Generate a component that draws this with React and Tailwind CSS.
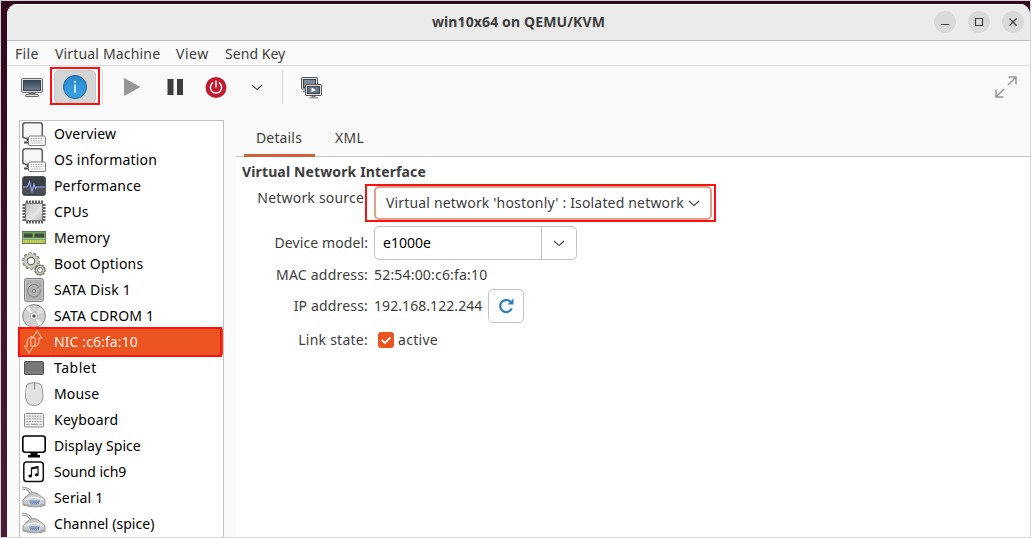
import React from "react";

const Chevron = () => (
  <svg className="h-[7px] w-[12px] shrink-0" viewBox="0 0 12 7" fill="none" stroke="#3d3d3d" strokeWidth="1.1">
    <path d="M1 1 L6 5.6 L11 1" />
  </svg>
);

function MonitorColor() {
  return (
    <svg width="22" height="20" viewBox="0 0 22 20">
      <defs>
        <linearGradient id="scr" x1="0" y1="0" x2="0" y2="1">
          <stop offset="0" stopColor="#36445c" />
          <stop offset="1" stopColor="#718095" />
        </linearGradient>
      </defs>
      <rect x="0.5" y="0.5" width="21" height="14" rx="1" fill="#dededb" stroke="#6b6b6b" />
      <rect x="2.5" y="2.5" width="17" height="10" fill="url(#scr)" stroke="#3a4350" />
      <path d="M8 15h6v2.5H8z" fill="#777" />
      <rect x="4.5" y="16.5" width="13" height="2" rx="0.6" fill="#eee" stroke="#6b6b6b" />
    </svg>
  );
}

function Screens() {
  return (
    <svg width="22" height="22" viewBox="0 0 22 22">
      <rect x="0.5" y="0.5" width="16" height="11.5" rx="0.8" fill="#e4e4e0" stroke="#555" />
      <rect x="2.5" y="2.5" width="12" height="8" fill="#7d8898" stroke="#39434f" />
      <path d="M2 14.5h4" stroke="#888" strokeWidth="2" />
      <rect x="4.5" y="7.5" width="16" height="11" rx="0.8" fill="#e4e4e0" stroke="#555" />
      <rect x="6.5" y="9.5" width="12" height="7" fill="#66758a" stroke="#39434f" />
      <path d="M10.500 10.500l4.500 2.500-4.500 2.500z" fill="#fff" />
      <path d="M10.500 19h4v1h-4z" fill="#777" />
      <rect x="8.500" y="20" width="8.500" height="1.500" fill="#999" />
    </svg>
  );
}

function Computer() {
  return (
    <svg width="24" height="24" viewBox="0 0 24 24">
      <rect x="0.800" y="0.800" width="19.500" height="15.500" rx="2.500" fill="#f7f7f7" stroke="#626262" strokeWidth="1.600" />
      <path d="M4.500 18h2M2 20.500h4.500" stroke="#4c4c4c" strokeWidth="2" />
      <rect x="6.500" y="14" width="17" height="9.500" rx="1.500" fill="#fff" stroke="#7a7a7a" />
      <path d="M8.500 16.500h13M8.500 18.800h13M9.500 21h11" stroke="#9d9d9d" strokeWidth="1.100" strokeDasharray="1.500 1" />
    </svg>
  );
}

function Performance() {
  return (
    <svg width="24" height="24" viewBox="0 0 24 24">
      <rect x="0.500" y="2.500" width="23" height="19" rx="2.500" fill="#3c3f45" stroke="#55575c" />
      <rect x="1" y="12" width="22" height="8" fill="#4c4f58" />
      <path d="M1 13h4.500l2-5.500 2.500 10 2-7 1.500 4 1-1.500H23" fill="none" stroke="#8fa8ea" strokeWidth="1.200" />
    </svg>
  );
}

function Cpu() {
  return (
    <svg width="24" height="24" viewBox="0 0 24 24">
      <defs>
        <linearGradient id="cpu" x1="0" y1="0" x2="1" y2="1">
          <stop offset="0" stopColor="#bdbdbd" />
          <stop offset=".6" stopColor="#e6e6e6" />
          <stop offset="1" stopColor="#b5b5b5" />
        </linearGradient>
      </defs>
      <path d="M4 2.500h17M4 21.500h17M2.500 4v17M21.500 4v17" stroke="#5f5f5f" strokeWidth="4" strokeDasharray="2 1" />
      <rect x="3.500" y="3.500" width="17" height="17" fill="url(#cpu)" stroke="#7b7b7b" />
    </svg>
  );
}

function Memory() {
  return (
    <svg width="24" height="24" viewBox="0 0 24 24">
      <rect x="0.500" y="5.500" width="23" height="12" fill="#70a35e" stroke="#5b7d54" />
      <path d="M2 7.500h8.500v4H2zM12.500 7.500H22v4h-9.500z" fill="#414a3e" />
      <path d="M1 15.500h22" stroke="#d6d552" strokeWidth="3" strokeDasharray="1.800 .5" />
      <path d="M0.500 12.700h23" stroke="#a9cf9c" />
    </svg>
  );
}

function Gears() {
  return (
    <svg width="24" height="24" viewBox="0 0 24 24" fill="none">
      <circle cx="9" cy="9" r="7.700" stroke="#6b6962" strokeWidth="2.200" strokeDasharray="3 1.800" />
      <circle cx="9" cy="9" r="5.200" stroke="#6b6962" strokeWidth="4.200" />
      <circle cx="9" cy="9" r="5.600" stroke="#d1cec2" strokeWidth="2.800" />
      <circle cx="9" cy="9" r="7.600" stroke="#d1cec2" strokeWidth="1" strokeDasharray="2.200 2.600" />
      <circle cx="18" cy="18" r="5" stroke="#73716b" strokeWidth="1.600" strokeDasharray="2 1.100" />
      <circle cx="18" cy="18" r="3.400" stroke="#73716b" strokeWidth="3" />
      <circle cx="18" cy="18" r="3.500" stroke="#cbc8be" strokeWidth="1.600" />
    </svg>
  );
}

function Disk() {
  return (
    <svg width="24" height="24" viewBox="0 0 24 24">
      <rect x="2.500" y="0.500" width="19" height="23" rx="2" fill="#b0b0b0" stroke="#808080" />
      <rect x="3.500" y="1.500" width="17" height="21" rx="1" fill="none" stroke="#c9c9c9" />
      <path d="M16.300 8.200A6.300 6.300 0 1 0 18.300 12.500" fill="none" stroke="#808080" />
      <circle cx="12" cy="13" r="1.500" fill="#ddd" stroke="#777" />
      <path d="M15 10.500l3.500-3.500" stroke="#888" />
    </svg>
  );
}

function Disc() {
  return (
    <svg width="24" height="24" viewBox="0 0 24 24">
      <circle cx="12" cy="12" r="11.400" fill="#d0d0d0" stroke="#868686" />
      <path d="M12 12L3.500 4.800A11 11 0 0 1 7 2.300zM12 12l8.500 7.200a11 11 0 0 1-3.500 2.500z" fill="#f4f4f4" />
      <path d="M12 12L18 3a11 11 0 0 1 4 5z" fill="#e0e0e0" />
      <circle cx="12" cy="12" r="3.700" fill="#efefef" stroke="#b3b3b3" strokeWidth=".8" />
      <circle cx="12" cy="12" r="1.600" fill="#444" />
    </svg>
  );
}

function Nic() {
  return (
    <svg width="24" height="24" viewBox="0 0 24 24" fill="none" stroke="#f8b89a" strokeWidth="1.200" strokeLinejoin="round">
      <path d="M15 1L10.500 8h2.700v4.500q0 2.500-1.200 4.200 4.500-1 4.800-5V8H20z" />
      <path d="M7 23L2.500 16h2.700v-4.500q.3-3.500 4.800-5-1.200 2-1.200 4.500v5H11.500z" />
    </svg>
  );
}

function Tablet() {
  return (
    <svg width="24" height="24" viewBox="0 0 24 24">
      <rect x="2.500" y="5.500" width="19" height="13" rx="1.200" fill="#777" stroke="#555" />
      <path d="M4 16.500h16" stroke="#858585" />
    </svg>
  );
}

function Mouse() {
  return (
    <svg width="24" height="24" viewBox="0 0 24 24">
      <path d="M5.500 2Q12-1 18.500 2 20.800 5 21 15.500 19.500 23.500 12.300 23.500 5 23.500 3.500 15.500 3.500 5 5.500 2z" fill="#e2e2e2" stroke="#939393" />
      <path d="M12.500 1v6.500" stroke="#888" />
      <path d="M5.500 4.500q-1 5-.5 10" fill="none" stroke="#f7f7f7" />
    </svg>
  );
}

function Keyboard() {
  return (
    <svg width="24" height="24" viewBox="0 0 24 24">
      <rect x="2.500" y="5.500" width="19" height="13.500" rx="1.200" fill="#f2f2f2" stroke="#888" />
      <path d="M4.500 8.200h15M4.500 10.900h15M4.500 13.600h15" stroke="#a2a2a2" strokeWidth="1.300" strokeDasharray="1.900 .7" />
      <path d="M4.500 16.300h3M9 16.300h7M17.500 16.300h2" stroke="#a2a2a2" strokeWidth="1.300" />
    </svg>
  );
}

function Display() {
  return (
    <svg width="24" height="24" viewBox="0 0 24 24">
      <rect x="0.800" y="2" width="22.400" height="16.300" rx="2.500" fill="none" stroke="#000" strokeWidth="1.600" />
      <path d="M8.500 19h7v2h2.500v2.500H6V21h2.500z" fill="#000" />
    </svg>
  );
}

function Sound() {
  return (
    <svg width="24" height="24" viewBox="0 0 24 24">
      <rect x="1.800" y="2" width="19.500" height="19.500" rx="2.800" fill="none" stroke="#111" strokeWidth="1.500" />
      <path d="M9.500 16V8l6.500-1.300v7.800" fill="none" stroke="#111" strokeWidth="1.200" />
      <path d="M9.500 7.500L16 6.200v2L9.500 9.500z" fill="#111" />
      <ellipse cx="8.200" cy="16" rx="1.900" ry="1.500" fill="#111" />
      <ellipse cx="14.700" cy="14.700" rx="1.900" ry="1.500" fill="#111" />
    </svg>
  );
}

function Serial() {
  return (
    <svg width="24" height="24" viewBox="0 0 24 24">
      <path d="M0 2.200Q7 1.500 10 9" fill="none" stroke="#999" strokeWidth="3" />
      <path d="M0 2.200Q7 1.500 10 9" fill="none" stroke="#dcdcdc" strokeWidth="1.400" />
      <path d="M7.500 7.500Q12 5 16 8q3.500 2.500 7 6v5.500q-10 3-22-.5V14z" fill="#c9c9c9" stroke="#999" />
      <path d="M2.500 14.200Q12 8.500 21.500 14.200" fill="none" stroke="#f3f3f3" strokeWidth="1.500" />
      <path d="M1.500 18.500q10 2.500 21 0" fill="none" stroke="#9d9d9d" />
      <path d="M6.500 14h12l-1.500 5H8z" fill="#6d8cb4" stroke="#dfe3e8" strokeWidth=".8" />
      <path d="M8.500 15.700h8M9 17.500h7" stroke="#a9c2e6" strokeWidth="1" strokeDasharray="1 1" />
    </svg>
  );
}

const devices = [
  { name: "Overview", Icon: Computer, cls: "tracking-[0.15px]" },
  { name: "OS information", Icon: Computer, cls: "tracking-[0.2px]" },
  { name: "Performance", Icon: Performance, cls: "tracking-[0.15px]" },
  { name: "CPUs", Icon: Cpu, cls: "tracking-[0.1px]" },
  { name: "Memory", Icon: Memory, cls: "tracking-[0.15px]" },
  { name: "Boot Options", Icon: Gears, cls: "tracking-[0.22px]" },
  { name: "SATA Disk 1", Icon: Disk, cls: "tracking-[0.2px]" },
  { name: "SATA CDROM 1", Icon: Disc, cls: "tracking-[0.18px]" },
  { name: "NIC :c6:fa:10", Icon: Nic, cls: "tracking-[0.1px]", selected: true },
  { name: "Tablet", Icon: Tablet, cls: "tracking-[0.5px]" },
  { name: "Mouse", Icon: Mouse, cls: "tracking-[0.15px]" },
  { name: "Keyboard", Icon: Keyboard, cls: "tracking-[0.25px]" },
  { name: "Display Spice", Icon: Display, cls: "tracking-[0.07px]" },
  { name: "Sound ich9", Icon: Sound, cls: "tracking-[-0.05px]" },
  { name: "Serial 1", Icon: Serial, cls: "tracking-[0.15px]" },
  { name: "Channel (spice)", Icon: Serial, cls: "tracking-[0.05px]" },
];

function TitleBar() {
  return (
    <header className="grid h-[37px] shrink-0 grid-cols-[96px_1fr_96px] items-center border-t border-b border-t-white border-b-[#bdbdbd] bg-[#ebebeb]">
      <div />
      <h1 className="pb-0.5 text-center text-[14px] font-bold tracking-[0.13px]">win10x64 on QEMU/KVM</h1>
      <div className="-mt-0.5 flex h-[22px] justify-end gap-3 pr-[6px]">
        {["M7 13.500h8", "M7.500 7.500h7v7h-7z", "M7.500 7.500l7 7M14.500 7.500l-7 7"].map((d) => (
          <button key={d} className="h-[22px] w-[22px] shrink-0 rounded-full bg-[#dadada]">
            <svg width="22" height="22" viewBox="0 0 22 22" fill="none" stroke="#3d3d3d" strokeWidth="1.200">
              <path d={d} />
            </svg>
          </button>
        ))}
      </div>
    </header>
  );
}

function Toolbar() {
  return (
    <div className="flex h-[54px] shrink-0 items-start pt-[4px] pr-[13px]">
      <div className="flex h-[34px] w-[47px] items-center pt-px pl-[14px]">
        <MonitorColor />
      </div>
      <div className="relative flex h-[34px] w-[42px] items-center justify-center rounded-[5px] border border-[#c6c6c6] bg-[#d5d5d5]">
        <svg width="24" height="24" viewBox="0 0 24 24">
          <defs>
            <linearGradient id="info" x1="0" y1="0" x2="0" y2="1">
              <stop offset="0" stopColor="#2c86cb" />
              <stop offset="1" stopColor="#37a5e6" />
            </linearGradient>
          </defs>
          <circle cx="12" cy="12" r="11.500" fill="url(#info)" stroke="#1c5f9c" />
          <path d="M12 9.500v8.500" stroke="#fff" strokeWidth="1.500" />
          <circle cx="12" cy="6.800" r="1" fill="#fff" />
        </svg>
        <span className="absolute -top-1 -left-[5px] h-[38px] w-[50px] border-2 border-[#fd1010]" />
      </div>
      <div className="ml-[6px] h-[34px] w-px bg-[#dadada]" />
      <div className="flex h-[34px] items-center pl-[21px]">
        <svg width="17" height="18" viewBox="0 0 17 18"><path d="M0 0l16.500 9L0 18z" fill="#979797" /></svg>
        <svg className="ml-[26px]" width="16" height="16" viewBox="0 0 16 16"><path d="M0.500 0h6v16H0.500zM10 0h6v16h-6z" fill="#3d3d3d" /></svg>
        <svg className="ml-[22px]" width="22" height="22" viewBox="0 0 22 22" fill="none">
          <circle cx="11" cy="11.500" r="10.500" fill="#c01c31" />
          <path d="M8.100 6.700a5.600 5.600 0 1 0 5.800 0M11 4.500v7" stroke="#fff" strokeWidth="1.400" />
        </svg>
        <div className="ml-[24px] pt-px"><Chevron /></div>
      </div>
      <div className="ml-[19px] h-[34px] w-px bg-[#dadada]" />
      <div className="flex h-[34px] items-center pt-px pl-[18px]"><Screens /></div>
      <div className="ml-auto flex h-[34px] items-center">
        <svg width="22" height="22" viewBox="0 0 22 22" fill="none" stroke="#979797" strokeWidth="1.500">
          <path d="M13.500 1h7.500v7.500M21 1l-8 8M8.500 21H1v-7.500M1 21l8-8" />
        </svg>
      </div>
    </div>
  );
}

function Label({ children, className = "tracking-[0.17px]" }) {
  return <div className={`w-[132px] shrink-0 text-right whitespace-nowrap ${className}`}>{children}</div>;
}

export default function App() {
  return (
    <div className="flex h-[538px] w-[1031px] overflow-hidden border-t border-r border-b border-l border-[#d4d4d4] bg-[linear-gradient(180deg,#33081f,#4b1b3b)] pt-[3px] pl-[6px] font-['Noto_Sans',sans-serif] text-[14px] leading-5 text-[#3d3d3d]">
      <div className="flex min-w-0 flex-1 flex-col overflow-hidden rounded-t-[10px] bg-[#fafafa]">
        <TitleBar />
        <nav className="flex h-[25px] shrink-0 items-center gap-4 border-b border-[#dcdcdc] pt-[2px] pl-2">
          <span className="w-6 tracking-[0.3px] whitespace-nowrap">File</span>
          <span className="w-[105px] tracking-[0.17px] whitespace-nowrap">Virtual Machine</span>
          <span className="w-[33px] tracking-[0.5px] whitespace-nowrap">View</span>
          <span className="tracking-[0.05px] whitespace-nowrap">Send Key</span>
        </nav>
        <Toolbar />
        <div className="flex min-h-0 flex-1">
          <aside className="ml-3 w-[205px] shrink-0 border border-b-0 border-[#c0c0c0] bg-white text-black">
            {devices.map(({ name, Icon, cls, selected }) => (
              <div
                key={name}
                className={
                  selected
                    ? "relative flex h-[26px] items-center gap-2 bg-[#e95420] pl-[2px] text-[#fff0e8]"
                    : "flex h-[26px] items-center gap-2 pl-[2px]"
                }
              >
                <Icon />
                <span className={`whitespace-nowrap ${cls}`}>{name}</span>
                {selected && <span className="absolute -top-[2px] -left-[2px] h-[30px] w-[204px] border-2 border-[#fd1010]" />}
              </div>
            ))}
          </aside>
          <main className="ml-3 flex flex-1 flex-col">
            <div className="flex h-[37px] shrink-0 items-stretch border-b border-[#c4c4c4] pl-2">
              <div className="-mb-px w-[71px] border-b-[3px] border-[#d05f35] pt-2 pr-px text-center tracking-[0.15px]">Details</div>
              <div className="w-[70px] pt-2 pr-px text-center tracking-[0.2px]">XML</div>
            </div>
            <section className="flex-1 bg-white">
              <h2 className="pt-[5px] pl-[6px] font-bold tracking-[0.13px]">Virtual Network Interface</h2>
              <div className="mt-1 flex h-[34px] gap-[6px]">
                <div className="pt-[2px]"><Label className="tracking-[0.2px]">Network source:</Label></div>
                <div className="relative flex h-[34px] w-[338px] items-center justify-between rounded-[5px] border-2 border-[#dea08c] pr-[10px] pl-[10px]">
                  <span className="tracking-[0.17px] whitespace-nowrap">Virtual network 'hostonly' : Isolated network</span>
                  <Chevron />
                  <span className="absolute -top-[4px] -left-[11px] h-[38px] w-[351px] border-2 border-[#fd1010]" />
                </div>
              </div>
              <div className="mt-[6px] flex h-[34px] items-center gap-[6px]">
                <Label className="tracking-[0.1px]">Device model:</Label>
                <div className="flex h-[34px] w-[203px] rounded-[5px] border border-[#c4c4c4]">
                  <span className="flex flex-1 items-center pl-2 text-black">e1000e</span>
                  <span className="flex w-[35px] items-center justify-center border-l border-[#c4c4c4]"><Chevron /></span>
                </div>
              </div>
              <div className="mt-[5px] flex h-5 items-center gap-[6px]">
                <Label className="tracking-[0.2px]">MAC address:</Label>
                <span className="tracking-[0.19px]">52:54:00:c6:fa:10</span>
              </div>
              <div className="mt-1 flex h-[34px] items-center gap-[6px]">
                <Label>IP address:</Label>
                <span className="w-[108px] tracking-[0.07px] whitespace-nowrap">192.168.122.244</span>
                <button className="flex h-[34px] w-9 items-center justify-center rounded-[5px] border border-[#c4c4c4]">
                  <svg width="16" height="16" viewBox="0 0 16 16" fill="none">
                    <path d="M12.300 3.600A6 6 0 1 0 13.700 10.500" stroke="#2a7bc0" strokeWidth="2.200" />
                    <path d="M15.500.5v6H9.500z" fill="#2a7bc0" />
                  </svg>
                </button>
              </div>
              <div className="mt-[7px] flex h-5 items-center">
                <Label className="tracking-[0.25px]">Link state:</Label>
                <svg className="ml-[10px]" width="16" height="16" viewBox="0 0 16 16">
                  <rect width="16" height="16" rx="3" fill="#e95420" />
                  <path d="M3.500 7.800l3.300 3.200 5.700-5.700" fill="none" stroke="#fff" strokeWidth="1.800" />
                </svg>
                <span className="ml-1 tracking-[0.3px]">active</span>
              </div>
            </section>
          </main>
        </div>
      </div>
    </div>
  );
}
